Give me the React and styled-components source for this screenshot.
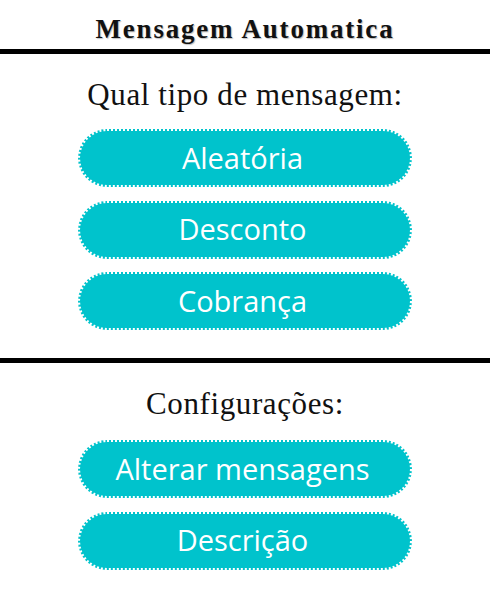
import React from "react";
import styled, { createGlobalStyle } from "styled-components";

const Global = createGlobalStyle`
  html, body { margin: 0; padding: 0; background: #ffffff; }
  * { box-sizing: border-box; }
`;

const Page = styled.div`
  width: 490px;
  display: flex;
  flex-direction: column;
`;

const Title = styled.h1`
  margin: 0;
  height: 49px;
  display: flex;
  align-items: center;
  justify-content: center;
  padding-top: 10px;
  font-family: "Liberation Serif", serif;
  font-weight: bold;
  font-size: 27px;
  letter-spacing: 1.8px;
  color: #111;
  text-shadow: 1px 1px 1px rgba(0, 0, 0, 0.25);
`;

const Rule = styled.div`
  height: ${(p) => p.$h || 5}px;
  background: #000;
  width: 100%;
`;

const Section = styled.section`
  display: flex;
  flex-direction: column;
  align-items: center;
  padding-top: ${(p) => p.$top}px;
  padding-bottom: ${(p) => p.$bottom}px;
`;

const Heading = styled.h2`
  margin: 0 0 ${(p) => p.$gap}px;
  height: 40px;
  line-height: 40px;
  font-family: "Liberation Serif", serif;
  font-weight: normal;
  font-size: 31px;
  letter-spacing: 0.6px;
  color: #111;
`;

const ButtonList = styled.div`
  display: flex;
  flex-direction: column;
  gap: 13.5px;
`;

const Button = styled.button`
  width: 334px;
  height: 58px;
  border-radius: 29px;
  border: 2px dotted #ffffff;
  background: #00c3cc;
  color: #ffffff;
  font-family: "Open Sans", sans-serif;
  font-size: 29px;
  padding: 0 5px 2px 0;
  cursor: pointer;
`;

export default function App() {
  return (
    <Page>
      <Global />
      <Title>Mensagem Automatica</Title>
      <Rule $h={5} />
      <Section $top={21} $bottom={28}>
        <Heading $gap={14}>Qual tipo de mensagem:</Heading>
        <ButtonList>
          <Button>Aleatória</Button>
          <Button>Desconto</Button>
          <Button>Cobrança</Button>
        </ButtonList>
      </Section>
      <Rule $h={5} />
      <Section $top={21} $bottom={20}>
        <Heading $gap={16}>Configurações:</Heading>
        <ButtonList>
          <Button>Alterar mensagens</Button>
          <Button>Descrição</Button>
        </ButtonList>
      </Section>
    </Page>
  );
}
